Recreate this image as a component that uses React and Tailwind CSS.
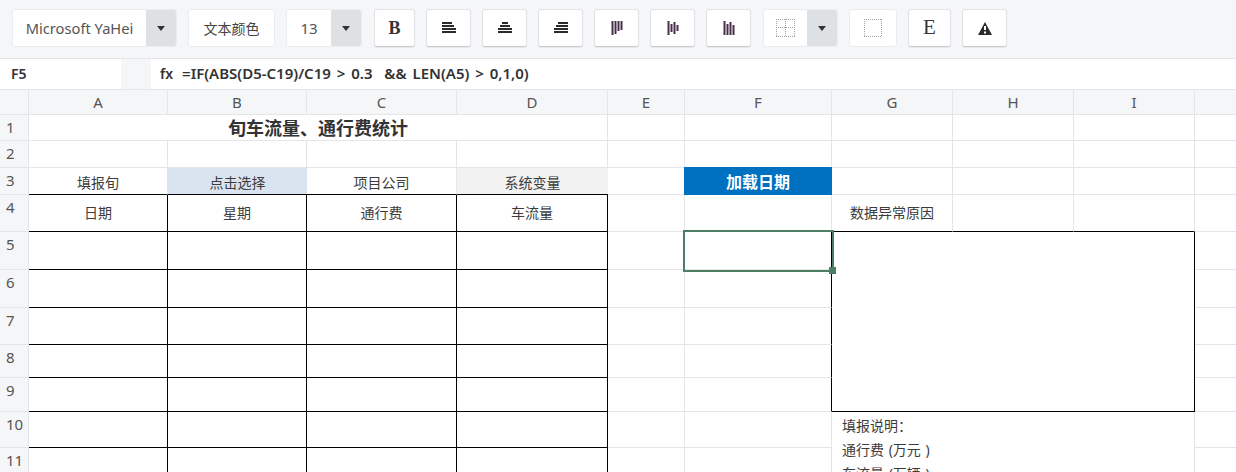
import React from 'react';

const cols = ['A', 'B', 'C', 'D', 'E', 'F', 'G', 'H', 'I', ''];
const rows = [6, 7, 8, 9];

const Caret = () => (
  <svg width="8" height="5" viewBox="0 0 8 5" className="text-[#333]">
    <path d="M0 0h8L4 5z" fill="currentColor" />
  </svg>
);

const ToolButton = ({ className = '', children }) => (
  <div
    className={`flex h-[38px] items-center justify-center rounded-[3px] border border-[#e2e3e6] border-b-[#c9cbcf] bg-white shadow-[0_1px_1px_rgba(0,0,0,0.06)] ${className}`}
  >
    {children}
  </div>
);

const SplitButton = ({ className = '', children }) => (
  <div className={`flex h-[38px] overflow-hidden rounded-[3px] border border-[#ebecee] bg-white ${className}`}>
    <div className="flex flex-1 items-center justify-center">{children}</div>
    <div className="flex w-[30px] items-center justify-center bg-[#dee1e4]">
      <Caret />
    </div>
  </div>
);

// horizontal alignment icon, bars given as [x, width]
const HAlign = ({ bars }) => (
  <svg width="14" height="12" viewBox="0 0 14 12">
    {bars.map(([x, w], i) => (
      <rect key={i} x={x} y={i * 3} width={w} height="2" fill="#2b2b2b" />
    ))}
  </svg>
);

// vertical alignment icon, bars given as [y, height]
const VAlign = ({ bars }) => (
  <svg width="12" height="14" viewBox="0 0 12 14">
    {bars.map(([y, h], i) => (
      <rect key={i} x={i * 3 + 0.5} y={y} width="2" height={h} fill="#4a2f4d" />
    ))}
  </svg>
);

const DottedGrid = () => (
  <svg width="19" height="18" viewBox="0 0 19 18" fill="none" stroke="#a3a3a3" strokeDasharray="1 1" shapeRendering="crispEdges">
    <path d="M0 .5H19M0 17.5H19M0 8.5H19M.5 0V18M18.5 0V18M9.5 0V18" />
  </svg>
);

const DottedBox = () => (
  <svg width="18" height="18" viewBox="0 0 18 18" fill="none" stroke="#a3a3a3" strokeDasharray="1 1" shapeRendering="crispEdges">
    <path d="M0 .5H18M0 17.5H18M.5 0V18M17.5 0V18" />
  </svg>
);

function Toolbar() {
  return (
    <div className="flex h-[59px] items-start gap-[11px] border-b border-[#e4e5e8] bg-[#f5f6f8] pl-[12px] pt-[9px]">
      <SplitButton className="w-[165px]">
        <span className="text-[14.7px] text-[#555]">Microsoft YaHei</span>
      </SplitButton>
      <ToolButton className="w-[87px] border-[#ebecee] border-b-[#ebecee] shadow-none">
        <span className="text-[14px] text-[#444]">文本颜色</span>
      </ToolButton>
      <SplitButton className="w-[76px]">
        <span className="text-[15px] text-[#555]">13</span>
      </SplitButton>
      <ToolButton className="ml-[1px] w-[41px]">
        <span className="font-['Liberation_Serif'] text-[18px] font-bold text-[#333]">B</span>
      </ToolButton>
      <ToolButton className="w-[45px]">
        <HAlign bars={[[0, 10], [0, 12], [0, 14], [0, 14]]} />
      </ToolButton>
      <ToolButton className="w-[45px]">
        <HAlign bars={[[4, 6], [2, 10], [0, 14], [0, 14]]} />
      </ToolButton>
      <ToolButton className="w-[45px]">
        <HAlign bars={[[4, 10], [2, 12], [0, 14], [0, 14]]} />
      </ToolButton>
      <ToolButton className="w-[45px]">
        <VAlign bars={[[0, 14], [0, 13], [0, 10], [0, 9]]} />
      </ToolButton>
      <ToolButton className="w-[45px]">
        <VAlign bars={[[0, 14], [3, 8], [1, 12], [4, 6]]} />
      </ToolButton>
      <ToolButton className="w-[45px]">
        <VAlign bars={[[0, 14], [3, 11], [1, 13], [4, 10]]} />
      </ToolButton>
      <SplitButton className="ml-[1px] w-[75px]">
        <DottedGrid />
      </SplitButton>
      <ToolButton className="w-[48px] border-[#ebecee] border-b-[#ebecee] shadow-none">
        <DottedBox />
      </ToolButton>
      <ToolButton className="w-[43px]">
        <span className="font-['Liberation_Serif'] text-[21px] text-[#3b3340]">E</span>
      </ToolButton>
      <ToolButton className="w-[45px]">
        <svg width="14" height="13" viewBox="0 0 14 13">
          <path d="M7 0L14 13H0z" fill="#2b2b2b" />
          <rect x="6" y="4" width="2" height="4" fill="#fff" />
          <rect x="6" y="9.5" width="2" height="2" fill="#fff" />
        </svg>
      </ToolButton>
    </div>
  );
}

function FormulaBar() {
  return (
    <div className="flex h-[30px] items-stretch bg-[#f5f6f8]">
      <div className="flex w-[121px] items-center bg-white pb-[2px] pl-[11px] text-[14px] font-semibold text-[#333]">F5</div>
      <div className="ml-[30px] flex flex-1 items-center bg-white pb-[2px] pl-[9px] font-semibold text-[#333]">
        <span className="mr-[9px] text-[14px]">fx</span>
        <span className="whitespace-pre text-[15px] [word-spacing:2px]">=IF(ABS(D5-C19)/C19 &gt; 0.3  &amp;&amp; LEN(A5) &gt; 0,1,0)</span>
      </div>
    </div>
  );
}

const gray = 'border-r border-b border-[#e3e5e8]';
const tableCell = 'border-r border-b border-black';
const tableHead = 'flex items-center justify-center pb-[2px] border-r border-b border-black';

const RowHead = ({ n }) => (
  <div className="border-r border-b border-[#e3e5e8] bg-[#f5f6f8] pl-[6px] pt-[2px] text-left text-[15px] leading-[20px] text-[#555]">
    {n}
  </div>
);

const Blank = ({ n }) => Array.from({ length: n }, (_, i) => <div key={i} className={gray} />);

const TableRow = () => (
  <>
    <div className={tableCell} />
    <div className={tableCell} />
    <div className={tableCell} />
    <div className={tableCell} />
  </>
);

function Sheet() {
  return (
    <div className="grid grid-cols-[29px_139px_139px_150px_151px_77px_147px_121px_121px_121px_42px] grid-rows-[26px_26px_27px_27px_37px_38px_38px_37px_33px_34px_36px_40px] text-[14px] text-[#3c3c3c]">
      {/* column headers */}
      <div className="border-t border-r border-b border-[#e3e5e8] bg-[#f5f6f8]" />
      {cols.map((c, i) => (
        <div
          key={i}
          className="flex items-center justify-center border-t border-r border-b border-[#e3e5e8] bg-[#f5f6f8] text-[15px] text-[#555]"
        >
          {c}
        </div>
      ))}

      {/* row 1 */}
      <RowHead n={1} />
      <div className={`col-span-4 flex items-center justify-center pt-[2px] text-[18px] font-bold text-[#333] ${gray}`}>
        旬车流量、通行费统计
      </div>
      <Blank n={6} />

      {/* row 2 */}
      <RowHead n={2} />
      <Blank n={10} />

      {/* row 3 */}
      <RowHead n={3} />
      <div className="flex items-center justify-center border-r border-b border-[#e3e5e8] border-b-black pt-[3px]">填报旬</div>
      <div className="flex items-center justify-center border-b border-b-black bg-[#dae4f0] pt-[3px]">点击选择</div>
      <div className="flex items-center justify-center border-r border-b border-[#e3e5e8] border-b-black pt-[3px]">项目公司</div>
      <div className="flex items-center justify-center border-b border-b-black bg-[#f2f2f2] pt-[3px]">系统变量</div>
      <div className={gray} />
      <div className="mt-[-1px] ml-[-1px] flex items-center justify-center bg-[#0070c0] pt-[1px] text-[16px] font-bold text-white">加载日期</div>
      <Blank n={4} />

      {/* row 4 */}
      <RowHead n={4} />
      <div className={tableHead}>日期</div>
      <div className={tableHead}>星期</div>
      <div className={tableHead}>通行费</div>
      <div className={tableHead}>车流量</div>
      <div className={gray} />
      <div className="border-r border-[#e3e5e8]" />
      <div className="flex items-center justify-center border-r border-b border-[#e3e5e8] border-b-black pb-[2px]">数据异常原因</div>
      <div className="border-r border-b border-[#e3e5e8] border-b-black" />
      <div className="border-r border-b border-[#e3e5e8] border-b-black" />
      <div className={gray} />

      {/* row 5, holds the selected cell and the merged reason box */}
      <RowHead n={5} />
      <TableRow />
      <div className={gray} />
      <div className="relative border-r border-b border-r-black border-b-[#e3e5e8]">
        <div className="absolute top-[-2px] right-[-3px] bottom-[-3px] left-[-2px] z-10 border-2 border-[#4e7f66]" />
        <div className="absolute right-[-5px] bottom-[-5px] z-10 h-[7px] w-[7px] bg-[#4e7f66]" />
      </div>
      <div className="col-span-3 row-span-5 border-r border-b border-black" />
      <div className={gray} />

      {rows.map((n) => (
        <React.Fragment key={n}>
          <RowHead n={n} />
          <TableRow />
          <div className={gray} />
          <div className="border-r border-b border-r-black border-b-[#e3e5e8]" />
          <div className={gray} />
        </React.Fragment>
      ))}

      {/* row 10 */}
      <RowHead n={10} />
      <TableRow />
      <div className={gray} />
      <div className={gray} />
      <div className="col-span-3 row-span-2 overflow-hidden border-r border-[#e3e5e8] pl-[10px] pt-[2px] leading-[24px] [word-spacing:1px]">
        <div>填报说明：</div>
        <div>通行费 (万元 )</div>
        <div>车流量 (万辆 )</div>
      </div>
      <div className={gray} />

      {/* row 11, cut off by the window */}
      <RowHead n={11} />
      <TableRow />
      <div className={gray} />
      <div className={gray} />
      <div className={gray} />
    </div>
  );
}

export default function App() {
  return (
    <div className="h-[472px] w-[1236px] overflow-hidden bg-white font-['Noto_Sans','Noto_Sans_CJK_SC',sans-serif]">
      <Toolbar />
      <FormulaBar />
      <Sheet />
    </div>
  );
}
